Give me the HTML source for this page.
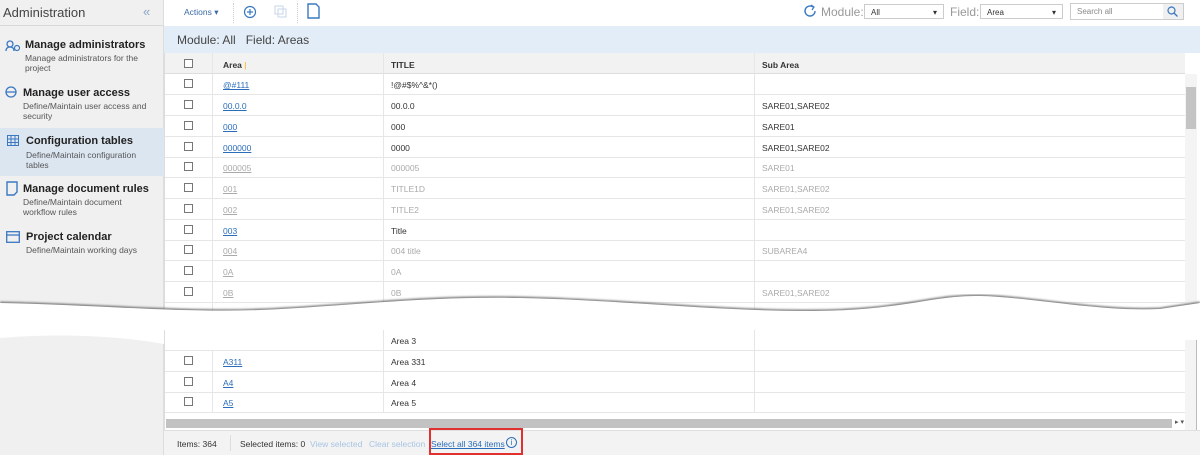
<!DOCTYPE html><html><head><style>
*{margin:0;padding:0;box-sizing:border-box}
body{width:1200px;height:455px;overflow:hidden;background:#fff;font-family:"Liberation Sans",sans-serif;position:relative;color:#333}
.a{position:absolute}
.side{left:0;top:0;width:164px;height:455px;background:#f0f0f0;border-right:1px solid #ddd}
.t{font-weight:bold;font-size:11px;color:#222}
.d{font-size:8.5px;color:#555;line-height:10px}
.row{position:absolute;left:164px;width:1022px;height:21px;border-bottom:1px solid #e6e6e6;font-size:8.5px}
.row span{position:absolute;top:6px}
.cb{position:absolute;left:20px;top:5px;width:9px;height:9px;border:1px solid #777;background:#fff}
.c1{left:59px}.c2{left:227px}.c3{left:598px}
.lk{color:#2a6ebb;text-decoration:underline}
.gr{color:#aaa}.gl{color:#aaa;text-decoration:underline}
.sel{position:absolute;height:15px;border:1px solid #ccc;background:#fff;font-size:8px;padding:3px 6px}
</style></head><body>
<div class="a side"></div>
<div class="a" style="left:0;top:0;width:164px;height:26px;border-bottom:1px solid #d8d8d8"></div>
<div class="a" style="left:3px;top:5px;font-size:13px;color:#444">Administration</div>
<div class="a" style="left:143px;top:4px;font-size:13px;color:#8aa6c8">«</div>
<svg class="a" style="left:5px;top:40px" width="16" height="12"><circle cx="5" cy="4" r="3" fill="none" stroke="#3a78c2" stroke-width="1.3"/><path d="M1 11c0-3 2-4 4-4s4 1 4 4" fill="none" stroke="#3a78c2" stroke-width="1.3"/><circle cx="12" cy="8" r="2.5" fill="none" stroke="#3a78c2" stroke-width="1.2"/></svg>
<div class="a t" style="left:25px;top:39px">Manage administrators</div>
<div class="a d" style="left:25px;top:53px">Manage administrators for the<br>project</div>
<svg class="a" style="left:5px;top:86px" width="12" height="12"><circle cx="6" cy="6" r="5" fill="none" stroke="#3a78c2" stroke-width="1.3"/><path d="M1 6h10" stroke="#3a78c2" stroke-width="1.3"/></svg>
<div class="a t" style="left:23px;top:87px">Manage user access</div>
<div class="a d" style="left:23px;top:101px">Define/Maintain user access and<br>security</div>
<div class="a" style="left:0;top:128px;width:164px;height:48px;background:#dce6f1"></div>
<svg class="a" style="left:7px;top:135px" width="12" height="11"><rect x=".5" y=".5" width="11" height="10" fill="none" stroke="#3a78c2"/><path d="M.5 4h11M.5 7.5h11M4 .5v10M8 .5v10" stroke="#3a78c2"/></svg>
<div class="a t" style="left:26px;top:135px">Configuration tables</div>
<div class="a d" style="left:26px;top:150px">Define/Maintain configuration<br>tables</div>
<svg class="a" style="left:6px;top:181px" width="12" height="15"><path d="M1 1h10v10l-3 3H1z" fill="none" stroke="#3a78c2" stroke-width="1.4"/></svg>
<div class="a t" style="left:23px;top:183px">Manage document rules</div>
<div class="a d" style="left:23px;top:197px">Define/Maintain document<br>workflow rules</div>
<svg class="a" style="left:6px;top:231px" width="14" height="12"><rect x=".7" y=".7" width="12.6" height="10.6" fill="none" stroke="#3a78c2" stroke-width="1.3"/><path d="M.7 4h12.6" stroke="#3a78c2" stroke-width="1.3"/></svg>
<div class="a t" style="left:26px;top:231px">Project calendar</div>
<div class="a d" style="left:26px;top:245px">Define/Maintain working days</div>

<div class="a" style="left:184px;top:7px;font-size:8.5px;color:#3a6aa8">Actions ▾</div>
<div class="a" style="left:233px;top:3px;width:1px;height:20px;border-left:1px dotted #ccc"></div>
<svg class="a" style="left:243px;top:5px" width="14" height="14"><circle cx="7" cy="7" r="5.5" fill="none" stroke="#3a78c2" stroke-width="1.2"/><path d="M7 4v6M4 7h6" stroke="#3a78c2" stroke-width="1.2"/></svg>
<svg class="a" style="left:274px;top:5px" width="14" height="14"><rect x="1" y="1" width="8" height="8" fill="none" stroke="#c8d6e8"/><rect x="4" y="4" width="8" height="8" fill="none" stroke="#c8d6e8"/></svg>
<div class="a" style="left:297px;top:3px;width:1px;height:20px;border-left:1px dotted #ccc"></div>
<svg class="a" style="left:307px;top:3px" width="14" height="16"><path d="M1 1h8l3 3v11H1z" fill="none" stroke="#3a78c2" stroke-width="1.4"/></svg>
<svg class="a" style="left:802px;top:3px" width="16" height="16"><path d="M13 8a5 5 0 1 1-2-4" fill="none" stroke="#3a78c2" stroke-width="1.4"/><path d="M9 2l3 2-2 3" fill="none" stroke="#3a78c2" stroke-width="1.2"/></svg>
<div class="a" style="left:821px;top:5px;font-size:12px;color:#999">Module:</div>
<div class="sel" style="left:864px;top:4px;width:80px">All<span style="position:absolute;right:6px">▾</span></div>
<div class="a" style="left:950px;top:5px;font-size:12px;color:#999">Field:</div>
<div class="sel" style="left:980px;top:4px;width:83px">Area<span style="position:absolute;right:6px">▾</span></div>
<div class="sel" style="left:1070px;top:3px;width:114px;height:17px;color:#888">Search all</div>
<div class="a" style="left:1163px;top:4px;width:20px;height:15px;background:#f0f0f0"></div>
<svg class="a" style="left:1167px;top:6px" width="11" height="11"><circle cx="4.5" cy="4.5" r="3.5" fill="none" stroke="#3a78c2" stroke-width="1.2"/><path d="M7 7l3.5 3.5" stroke="#3a78c2" stroke-width="1.3"/></svg>

<div class="a" style="left:164px;top:26px;width:1036px;height:27px;background:#e3edf8"></div>
<div class="a" style="left:177px;top:33px;font-size:12px;color:#444">Module: All&nbsp;&nbsp; Field: Areas</div>
<div class="a" style="left:164px;top:53px;width:1021px;height:21px;background:#f2f2f2;border-bottom:1px solid #ddd;font-size:8.5px;font-weight:bold">
<div class="cb" style="top:6px"></div><span class="a" style="left:59px;top:7px">Area <span style="color:#f3c84a">|</span></span><span class="a" style="left:227px;top:7px">TITLE</span><span class="a" style="left:598px;top:7px">Sub Area</span></div>
<div class="a" style="left:1185px;top:53px;width:15px;height:21px;background:#fff"></div>

<div class="row" style="top:74px"><div class="cb"></div><span class="c1 lk">@#111</span><span class="c2">!@#$%^&amp;*()</span></div>
<div class="row" style="top:95px"><div class="cb"></div><span class="c1 lk">00.0.0</span><span class="c2">00.0.0</span><span class="c3">SARE01,SARE02</span></div>
<div class="row" style="top:116px"><div class="cb"></div><span class="c1 lk">000</span><span class="c2">000</span><span class="c3">SARE01</span></div>
<div class="row" style="top:137px"><div class="cb"></div><span class="c1 lk">000000</span><span class="c2">0000</span><span class="c3">SARE01,SARE02</span></div>
<div class="row" style="top:157px"><div class="cb"></div><span class="c1 gl">000005</span><span class="c2 gr">000005</span><span class="c3 gr">SARE01</span></div>
<div class="row" style="top:178px"><div class="cb"></div><span class="c1 gl">001</span><span class="c2 gr">TITLE1D</span><span class="c3 gr">SARE01,SARE02</span></div>
<div class="row" style="top:199px"><div class="cb"></div><span class="c1 gl">002</span><span class="c2 gr">TITLE2</span><span class="c3 gr">SARE01,SARE02</span></div>
<div class="row" style="top:220px"><div class="cb"></div><span class="c1 lk">003</span><span class="c2">Title</span></div>
<div class="row" style="top:240px"><div class="cb"></div><span class="c1 gl">004</span><span class="c2 gr">004 title</span><span class="c3 gr">SUBAREA4</span></div>
<div class="row" style="top:261px"><div class="cb"></div><span class="c1 gl">0A</span><span class="c2 gr">0A</span></div>
<div class="row" style="top:282px"><div class="cb"></div><span class="c1 gl">0B</span><span class="c2 gr">0B</span><span class="c3 gr">SARE01,SARE02</span></div>
<div class="a" style="left:164px;top:53px;width:1px;height:260px;background:#ddd"></div>
<div class="a" style="left:212px;top:53px;width:1px;height:260px;background:#e6e6e6"></div>
<div class="a" style="left:383px;top:53px;width:1px;height:260px;background:#e6e6e6"></div>
<div class="a" style="left:754px;top:53px;width:1px;height:260px;background:#e6e6e6"></div>
<div class="a" style="left:1185px;top:74px;width:12px;height:240px;background:#f4f4f4"></div>
<div class="a" style="left:1186px;top:87px;width:10px;height:42px;background:#c4c4c4"></div>

<div class="row" style="top:330px"><span class="c2">Area 3</span></div>
<div class="row" style="top:351px"><div class="cb"></div><span class="c1 lk">A311</span><span class="c2">Area 331</span></div>
<div class="row" style="top:372px"><div class="cb"></div><span class="c1 lk">A4</span><span class="c2">Area 4</span></div>
<div class="row" style="top:392px"><div class="cb"></div><span class="c1 lk">A5</span><span class="c2">Area 5</span></div>
<div class="a" style="left:164px;top:330px;width:1px;height:125px;background:#ddd"></div>
<div class="a" style="left:212px;top:351px;width:1px;height:62px;background:#e6e6e6"></div>
<div class="a" style="left:383px;top:330px;width:1px;height:83px;background:#e6e6e6"></div>
<div class="a" style="left:754px;top:330px;width:1px;height:83px;background:#e6e6e6"></div>
<div class="a" style="left:1185px;top:340px;width:12px;height:115px;background:#f4f4f4;border-right:1px solid #bbb"></div>
<div class="a" style="left:166px;top:419px;width:1006px;height:9px;background:#c2c2c2"></div>
<div class="a" style="left:1175px;top:418px;font-size:7px;color:#555">▸ ▾</div>
<div class="a" style="left:164px;top:430px;width:1036px;height:25px;background:#f3f3f3;border-top:1px solid #e0e0e0;font-size:8.5px">
<span class="a" style="left:13px;top:8px">Items: 364</span>
<span class="a" style="left:66px;top:4px;width:1px;height:16px;background:#ddd"></span>
<span class="a" style="left:76px;top:8px">Selected items: 0</span>
<span class="a" style="left:146px;top:8px;color:#a8c4e4">View selected</span>
<span class="a" style="left:205px;top:8px;color:#a8c4e4">Clear selection</span>
<span class="a" style="left:267px;top:8px;color:#2a6ebb;text-decoration:underline">Select all 364 items</span>
<span class="a" style="left:342px;top:6px;width:11px;height:11px;border:1px solid #2a6ebb;border-radius:50%;color:#2a6ebb;font-size:8px;text-align:center;line-height:9px">i</span>
</div>
<div class="a" style="left:429px;top:428px;width:94px;height:27px;border:2px solid #e03030"></div>

<svg class="a" style="left:0;top:0" width="1200" height="455">
<defs><filter id="s"><feGaussianBlur stdDeviation="1"/></filter></defs>
<path d="M0 303C100 305 180 313 260 310S420 296 520 298S700 310 800 311S930 295 980 296S1100 312 1160 309L1200 303" fill="none" stroke="#666" stroke-width="2.5" filter="url(#s)"/>
<path d="M0 303C100 305 180 313 260 310S420 296 520 298S700 310 800 311S930 295 980 296S1100 312 1160 309L1200 303V330H164V344C120 336 60 333 0 338Z" fill="#fff"/>
</svg>
</body></html>
